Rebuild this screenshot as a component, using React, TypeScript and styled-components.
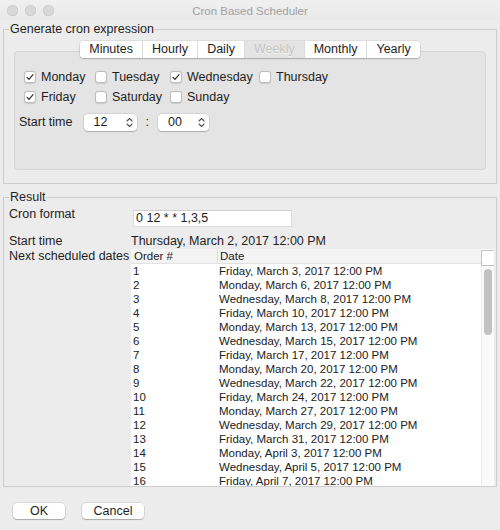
import React from "react";
import styled, { createGlobalStyle } from "styled-components";

const GlobalStyle = createGlobalStyle`
  html, body { margin: 0; padding: 0; background: #ececec; }
  body { font-family: "Liberation Sans", Arial, sans-serif; }
  #root { width: 500px; height: 530px; overflow: hidden; }
`;

const Window = styled.div`
  width: 500px;
  height: 530px;
  background: #ececec;
  display: flex;
  flex-direction: column;
  font-family: "Liberation Sans", Arial, sans-serif;
  font-size: 12.5px;
  color: #1e1e1e;
  box-sizing: border-box;
`;

const TitleBar = styled.div`
  height: 20px;
  flex: none;
  display: grid;
  grid-template-columns: 1fr auto 1fr;
  align-items: center;
  background: linear-gradient(#f0f0f0, #e9e9e9);
`;

const Lights = styled.div`
  display: flex;
  gap: 7px;
  padding-left: 7px;
  padding-top: 1px;
`;

const Light = styled.span`
  width: 11px;
  height: 11px;
  border-radius: 50%;
  background: #d8d8d8;
  box-shadow: inset 0 0 0 0.5px #c6c6c6;
`;

const Title = styled.div`
  font-size: 11.5px;
  color: #a0a0a0;
  padding-top: 1px;
`;

const Group = styled.fieldset<{ $top: number }>`
  margin: ${(p) => p.$top}px 3px 0;
  padding: 0;
  border: 1px solid #cdcdcd;
  min-width: 0;
  flex: none;
`;

const Legend = styled.legend`
  margin-left: 5px;
  padding: 0 1px;
  line-height: 15px;
  font-size: 12.5px;
  color: #1e1e1e;
`;

const TabbedPane = styled.div`
  margin: 4px 10px 13px;
  display: flex;
  flex-direction: column;
  align-items: center;
`;

const TabStrip = styled.div`
  display: flex;
  height: 17px;
  background: #fff;
  border-radius: 4px;
  box-shadow: 0 0 0 0.5px rgba(0, 0, 0, 0.12), 0 1px 1.5px rgba(0, 0, 0, 0.22);
  position: relative;
  z-index: 1;
  overflow: hidden;
`;

const Tab = styled.div<{ $selected?: boolean }>`
  padding: 0 9px;
  line-height: 17px;
  font-size: 12.5px;
  color: ${(p) => (p.$selected ? "#c4c4c4" : "#1e1e1e")};
  background: ${(p) => (p.$selected ? "#e4e4e4" : "#fff")};
  text-shadow: ${(p) => (p.$selected ? "0 1px 0 #f4f4f4" : "none")};
  & + & {
    border-left: 1px solid #dadada;
  }
`;

const Panel = styled.div`
  align-self: stretch;
  margin-top: -7px;
  height: 119px;
  box-sizing: border-box;
  background: #e4e4e4;
  border: 1px solid #d6d6d6;
  border-radius: 4px;
  padding-top: 15px;
`;

const DayGrid = styled.div`
  margin-left: 9px;
  display: grid;
  grid-template-columns: 71px 75px 89px auto;
  grid-auto-rows: 20px;
  align-items: center;
`;

const CheckItem = styled.label`
  display: flex;
  align-items: center;
  gap: 5px;
  white-space: nowrap;
`;

const Box = styled.span`
  width: 12px;
  height: 12px;
  box-sizing: border-box;
  background: #fff;
  border: 1px solid #bdbdbd;
  border-radius: 3px;
  box-shadow: 0 0.5px 1px rgba(0, 0, 0, 0.12);
  display: flex;
  align-items: center;
  justify-content: center;
`;

const StartRow = styled.div`
  margin-top: 5px;
  padding-left: 4px;
  height: 20px;
  display: flex;
  align-items: center;
`;

const StartLabel = styled.span`
  margin-right: 11px;
`;

const Spinner = styled.div<{ $w: number }>`
  width: ${(p) => p.$w}px;
  height: 17px;
  box-sizing: border-box;
  background: #fff;
  border-radius: 4px;
  box-shadow: 0 0 0 0.5px rgba(0, 0, 0, 0.14), 0 1px 1px rgba(0, 0, 0, 0.18);
  display: flex;
  align-items: center;
  justify-content: space-between;
  padding: 0 4px 0 10px;
`;

const Colon = styled.span`
  margin: 0 9px;
`;

const FormRow = styled.div<{ $h: number; $top: number }>`
  display: grid;
  grid-template-columns: 122px 1fr;
  height: ${(p) => p.$h}px;
  margin-top: ${(p) => p.$top}px;
  padding-left: 5px;
  padding-right: 2px;
  align-items: start;
`;

const FormLabel = styled.div`
  line-height: 15px;
  white-space: nowrap;
  overflow: hidden;
`;

const FormValue = styled.div`
  line-height: 15px;
  white-space: nowrap;
`;

const TextField = styled.div`
  margin: 3px 0 0 2px;
  width: 159px;
  height: 17px;
  box-sizing: border-box;
  background: #fff;
  border: 1px solid #dcdcdc;
  border-top-color: #cfcfcf;
  padding-left: 2px;
  line-height: 15px;
`;

const Table = styled.div`
  height: 237px;
  display: flex;
  background: #fff;
  overflow: hidden;
`;

const TableMain = styled.div`
  flex: 1;
  display: flex;
  flex-direction: column;
  font-size: 11.5px;
  color: #222;
`;

const HeaderRow = styled.div`
  display: grid;
  grid-template-columns: 86px 1fr;
  height: 15px;
  flex: none;
  box-sizing: border-box;
  background: #f4f4f4;
  border-bottom: 1px solid #e2e2e2;
`;

const HeaderCell = styled.div<{ $pad: number }>`
  line-height: 14px;
  padding-left: ${(p) => p.$pad}px;
  & + & {
    border-left: 1px solid #e0e0e0;
  }
`;

const BodyRow = styled.div`
  display: grid;
  grid-template-columns: 86px 1fr;
  height: 14px;
  line-height: 14px;
  flex: none;
`;

const Cell = styled.div<{ $pad: number }>`
  padding-left: ${(p) => p.$pad}px;
  white-space: nowrap;
`;

const ScrollColumn = styled.div`
  width: 13px;
  flex: none;
  display: flex;
  flex-direction: column;
`;

const Corner = styled.div`
  height: 14px;
  flex: none;
  background: #fff;
  border: 1px solid #c4c4c4;
  border-right: none;
  margin-top: 1px;
`;

const Track = styled.div`
  flex: 1;
  background: #fafafa;
  border-left: 1px solid #ececec;
`;

const Thumb = styled.div`
  margin: 3px 0 0 2px;
  width: 8px;
  height: 66px;
  border-radius: 4px;
  background: #c2c2c2;
`;

const Footer = styled.div`
  display: flex;
  gap: 17px;
  padding: 16px 0 0 13px;
`;

const Button = styled.div<{ $w: number }>`
  width: ${(p) => p.$w}px;
  height: 16px;
  line-height: 16px;
  text-align: center;
  background: #fff;
  border-radius: 4px;
  box-shadow: 0 0 0 0.5px rgba(0, 0, 0, 0.16), 0 1px 1px rgba(0, 0, 0, 0.22);
`;

const Check = () => (
  <svg width="10" height="10" viewBox="0 0 10 10">
    <path d="M2 5.3 L4 7.4 L8 2.6" fill="none" stroke="#333" strokeWidth="1.2" strokeLinecap="round" strokeLinejoin="round" />
  </svg>
);

const Arrows = () => (
  <svg width="7" height="11" viewBox="0 0 7 11">
    <path d="M1 4 L3.5 1.5 L6 4 M1 7 L3.5 9.5 L6 7" fill="none" stroke="#555" strokeWidth="1.1" strokeLinecap="round" strokeLinejoin="round" />
  </svg>
);

const tabs = ["Minutes", "Hourly", "Daily", "Weekly", "Monthly", "Yearly"];

const days: { name: string; checked: boolean }[] = [
  { name: "Monday", checked: true },
  { name: "Tuesday", checked: false },
  { name: "Wednesday", checked: true },
  { name: "Thursday", checked: false },
  { name: "Friday", checked: true },
  { name: "Saturday", checked: false },
  { name: "Sunday", checked: false },
];

const dates = [
  "Friday, March 3, 2017 12:00 PM",
  "Monday, March 6, 2017 12:00 PM",
  "Wednesday, March 8, 2017 12:00 PM",
  "Friday, March 10, 2017 12:00 PM",
  "Monday, March 13, 2017 12:00 PM",
  "Wednesday, March 15, 2017 12:00 PM",
  "Friday, March 17, 2017 12:00 PM",
  "Monday, March 20, 2017 12:00 PM",
  "Wednesday, March 22, 2017 12:00 PM",
  "Friday, March 24, 2017 12:00 PM",
  "Monday, March 27, 2017 12:00 PM",
  "Wednesday, March 29, 2017 12:00 PM",
  "Friday, March 31, 2017 12:00 PM",
  "Monday, April 3, 2017 12:00 PM",
  "Wednesday, April 5, 2017 12:00 PM",
  "Friday, April 7, 2017 12:00 PM",
  "Monday, April 10, 2017 12:00 PM",
];

export default function App() {
  return (
    <>
      <GlobalStyle />
      <Window>
        <TitleBar>
          <Lights>
            <Light />
            <Light />
            <Light />
          </Lights>
          <Title>Cron Based Scheduler</Title>
          <div />
        </TitleBar>

        <Group $top={2}>
          <Legend>Generate cron expression</Legend>
          <TabbedPane>
            <TabStrip>
              {tabs.map((t) => (
                <Tab key={t} $selected={t === "Weekly"}>
                  {t}
                </Tab>
              ))}
            </TabStrip>
            <Panel>
              <DayGrid>
                {days.map((d) => (
                  <CheckItem key={d.name}>
                    <Box>{d.checked && <Check />}</Box>
                    {d.name}
                  </CheckItem>
                ))}
              </DayGrid>
              <StartRow>
                <StartLabel>Start time</StartLabel>
                <Spinner $w={53}>
                  <span>12</span>
                  <Arrows />
                </Spinner>
                <Colon>:</Colon>
                <Spinner $w={51}>
                  <span>00</span>
                  <Arrows />
                </Spinner>
              </StartRow>
            </Panel>
          </TabbedPane>
        </Group>

        <Group $top={6}>
          <Legend>Result</Legend>
          <FormRow $h={20} $top={2}>
            <FormLabel>Cron format</FormLabel>
            <TextField>0 12 * * 1,3,5</TextField>
          </FormRow>
          <FormRow $h={15} $top={7}>
            <FormLabel>Start time</FormLabel>
            <FormValue>Thursday, March 2, 2017 12:00 PM</FormValue>
          </FormRow>
          <FormRow $h={237} $top={0}>
            <FormLabel>Next scheduled dates</FormLabel>
            <Table>
              <TableMain>
                <HeaderRow>
                  <HeaderCell $pad={3}>Order #</HeaderCell>
                  <HeaderCell $pad={2}>Date</HeaderCell>
                </HeaderRow>
                {dates.map((d, i) => (
                  <BodyRow key={d}>
                    <Cell $pad={2}>{i + 1}</Cell>
                    <Cell $pad={2}>{d}</Cell>
                  </BodyRow>
                ))}
              </TableMain>
              <ScrollColumn>
                <Corner />
                <Track>
                  <Thumb />
                </Track>
              </ScrollColumn>
            </Table>
          </FormRow>
        </Group>

        <Footer>
          <Button $w={52}>OK</Button>
          <Button $w={62}>Cancel</Button>
        </Footer>
      </Window>
    </>
  );
}
